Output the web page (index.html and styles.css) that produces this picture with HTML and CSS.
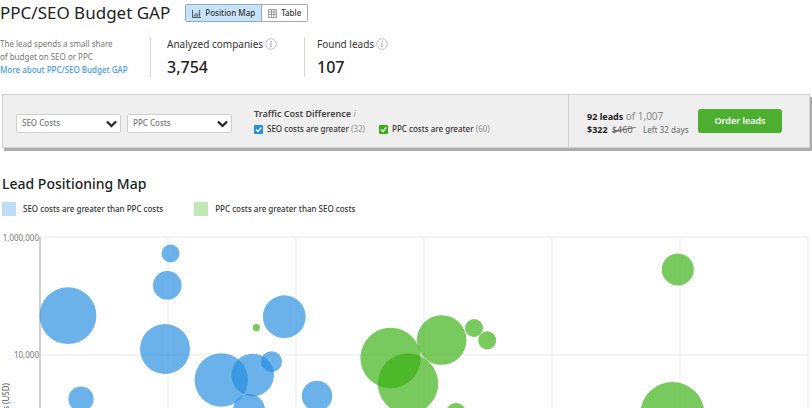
FILE: index.html
```html
<!DOCTYPE html>
<html lang="en">
<head>
<meta charset="utf-8">
<title>PPC/SEO Budget GAP</title>
<link rel="stylesheet" href="styles.css">
</head>
<body>
<header class="page-head">
  <h1 class="page-title">PPC/SEO Budget GAP</h1>
  <div class="view-switch">
    <button class="view-btn view-btn-active" type="button">
      <svg width="9" height="9" viewBox="0 0 10 10" fill="none" stroke="#37454f"><path d="M.5 1v8.500H10M2.500 6v2.500M4.500 4v4.500M6.500 5v3.500M8.500 1v7.500"/></svg>
      Position Map
    </button>
    <button class="view-btn" type="button">
      <svg width="9" height="9" viewBox="0 0 9 9" fill="none" stroke="#8b8b8b"><path d="M.5.5h8v8h-8zM.5 3h8M.5 5.500h8M3.500.5v8M6 .5v8" stroke-width=".8"/></svg>
      Table
    </button>
  </div>
</header>

<section class="stats">
  <div class="intro">
    <p>The lead spends a small share<br>of budget on SEO or PPC</p>
    <a class="more" href="#">More about PPC/SEO Budget GAP</a>
  </div>
  <div class="stat">
    <div class="stat-label">Analyzed companies
      <svg width="12" height="12" viewBox="0 0 12 12" fill="none" stroke="#c4c4c4"><circle cx="6" cy="6" r="5.300"/><path d="M6.600 3v1.200M5.200 5.300h1L5.700 8.700h1" stroke="#a5a5a5"/></svg>
    </div>
    <div class="stat-value">3,754</div>
  </div>
  <div class="stat">
    <div class="stat-label">Found leads
      <svg width="12" height="12" viewBox="0 0 12 12" fill="none" stroke="#c4c4c4"><circle cx="6" cy="6" r="5.300"/><path d="M6.600 3v1.200M5.200 5.300h1L5.700 8.700h1" stroke="#a5a5a5"/></svg>
    </div>
    <div class="stat-value">107</div>
  </div>
</section>

<section class="toolbar">
  <div class="filters">
    <div class="select-box">
      <select class="select" aria-label="SEO Costs"><option>SEO Costs</option></select>
      <svg class="chevron" width="11" height="8" viewBox="0 0 11 8" fill="none" stroke="#222" stroke-width="2.200"><path d="M1 1.500l4.500 4.500L10 1.500"/></svg>
    </div>
    <div class="select-box">
      <select class="select" aria-label="PPC Costs"><option>PPC Costs</option></select>
      <svg class="chevron" width="11" height="8" viewBox="0 0 11 8" fill="none" stroke="#222" stroke-width="2.200"><path d="M1 1.500l4.500 4.500L10 1.500"/></svg>
    </div>
    <div class="difference">
      <div class="difference-title">Traffic Cost Difference <i>i</i></div>
      <div class="checks">
        <label class="check"><span class="tick"><input class="box box-seo" type="checkbox" checked><svg class="mark" width="9" height="9" viewBox="0 0 9 9" fill="none" stroke="#fff" stroke-width="1.500"><path d="M2 4.500l2 2L7.200 2.500"/></svg></span><span>SEO costs are greater <span class="count">(32)</span></span></label>
        <label class="check"><span class="tick"><input class="box box-ppc" type="checkbox" checked><svg class="mark" width="9" height="9" viewBox="0 0 9 9" fill="none" stroke="#fff" stroke-width="1.500"><path d="M2 4.500l2 2L7.200 2.500"/></svg></span><span>PPC costs are greater <span class="count">(60)</span></span></label>
      </div>
    </div>
  </div>
  <div class="order">
    <div class="offer">
      <div class="offer-line"><b>92 leads</b> <span class="total">of 1,007</span></div>
      <div class="offer-line"><b>$322</b> <span class="old-price">$460</span> <span class="left">Left 32 days</span></div>
    </div>
    <button class="order-btn" type="button">Order leads</button>
  </div>
</section>

<main class="map">
  <h2 class="map-title">Lead Positioning Map</h2>
  <ul class="legend">
    <li class="legend-item"><span class="swatch swatch-seo"></span>SEO costs are greater than PPC costs</li>
    <li class="legend-item"><span class="swatch swatch-ppc"></span>PPC costs are greater than SEO costs</li>
  </ul>
</main>
<svg class="chart" viewBox="0 0 812 178">
  <g class="grid">
    <path d="M40 7h768M40 125h768M168 7v171M296 7v171M424 7v171M552 7v171M680 7v171M808 7v171"/>
  </g>
  <path class="axis" d="M40 7v171"/>
  <text class="tick-label" x="39" y="11">1,000,000</text>
  <text class="tick-label" x="39" y="128">10,000</text>
  <text class="axis-title" transform="translate(9 153) rotate(-90)">s (USD)</text>
  <g class="seo">
    <circle cx="68" cy="85.700" r="28.400"/>
    <circle cx="170.500" cy="23.500" r="9"/>
    <circle cx="167.300" cy="55.300" r="14.300"/>
    <circle cx="165" cy="119" r="25"/>
    <circle cx="81" cy="169" r="12.600"/>
    <circle cx="221.300" cy="150" r="26.700"/>
    <circle cx="252.700" cy="145" r="21.300"/>
    <circle cx="271.500" cy="131.700" r="10.500"/>
    <circle cx="284.300" cy="86.700" r="21.400"/>
    <circle cx="249" cy="180" r="16"/>
    <circle cx="317" cy="166" r="15.200"/>
  </g>
  <g class="ppc">
    <circle cx="256.300" cy="97.700" r="3.600"/>
    <circle cx="390.600" cy="128" r="30.200"/>
    <circle cx="408" cy="153.700" r="30.200"/>
    <circle cx="441.700" cy="110" r="24.800"/>
    <circle cx="474" cy="98" r="9"/>
    <circle cx="487.200" cy="110.300" r="9"/>
    <circle cx="456" cy="183" r="10"/>
    <circle cx="677.800" cy="39.500" r="16"/>
    <circle cx="672.400" cy="184" r="32"/>
  </g>
</svg>
</body>
</html>
```
FILE: styles.css
```css
* { box-sizing: border-box; }
body {
  margin: 0;
  background: #fff;
  color: #333;
  font-family: "Noto Sans", sans-serif;
  font-size: 8px;
  line-height: 12px;
}
h1, h2, p, ul { margin: 0; padding: 0; font-weight: 400; }
button, select { font: inherit; color: inherit; }
svg { flex: none; }

.page-head { display: flex; align-items: center; gap: 15px; height: 26px; }
.page-title { font-size: 17px; line-height: 26px; color: #222; }
.view-switch { display: flex; height: 18px; }
.view-btn {
  display: flex;
  align-items: center;
  gap: 4px;
  padding: 0 6px;
  border: 1px solid #a9a9a9;
  border-radius: 0 2px 2px 0;
  background: #fff;
  font-weight: 500;
}
.view-btn + .view-btn { border-left: 0; }
.view-btn-active { background: #c8e3f8; border-color: #85aecb; border-radius: 2px 0 0 2px; }

.stats { display: flex; margin-top: 11px; height: 40px; }
.intro { width: 150px; color: #777; font-weight: 500; line-height: 13px; white-space: nowrap; }
.more { color: #3f9bea; text-decoration: none; }
.stat { width: 154px; padding-left: 16px; border-left: 1px solid #d8d8d8; }
.stat + .stat { padding-left: 12px; }
.stat-label { display: flex; align-items: center; gap: 2px; font-size: 10px; line-height: 14px; }
.stat-value { margin-top: 6px; font-size: 16px; line-height: 20px; font-weight: 500; color: #222; }

.toolbar {
  display: flex;
  margin: 17px 2px 0;
  height: 54px;
  border: 1px solid #d2d2d2;
  background: #efefef;
  box-shadow: 2px 3px 0 #ababab;
}
.filters { flex: 1; display: flex; align-items: center; gap: 6px; padding-left: 13px; }
.select-box { position: relative; width: 105px; }
.select {
  display: block;
  width: 100%;
  height: 19px;
  margin-top: 4px;
  padding: 0 5px;
  border: 1px solid #cfcfcf;
  border-radius: 2px;
  background: #fff;
  color: #777;
  font-weight: 500;
  appearance: none;
}
.chevron { position: absolute; right: 4px; top: 10px; pointer-events: none; }
.difference { margin-left: 16px; }
.difference-title { font-size: 9px; line-height: 14px; font-weight: 600; color: #444; }
.difference-title i { color: #999; font-weight: 400; }
.checks { display: flex; gap: 14px; margin-top: 2px; font-weight: 500; }
.check { display: flex; align-items: center; gap: 4px; }
.tick { position: relative; width: 9px; height: 9px; }
.box { display: block; width: 9px; height: 9px; margin: 0; appearance: none; border-radius: 1px; }
.box-seo { background: #248edf; }
.box-ppc { background: #38b011; }
.mark { position: absolute; inset: 0; pointer-events: none; }
.count { color: #999; }

.order {
  display: flex;
  align-items: center;
  gap: 6px;
  width: 241px;
  padding-left: 18px;
  border-left: 1px solid #d2d2d2;
}
.offer { width: 105px; padding-top: 4px; white-space: nowrap; }
.offer-line { font-size: 9px; line-height: 13px; }
.offer-line b { color: #222; }
.total { font-size: 10px; color: #888; }
.old-price { position: relative; margin-left: 2px; color: #666; }
.old-price::after {
  content: "";
  position: absolute;
  left: 0;
  right: -3px;
  top: 6px;
  border-top: 1px solid #555;
  transform: rotate(-10deg);
}
.left { margin-left: 8px; font-size: 8px; font-weight: 500; color: #777; }
.order-btn {
  width: 84px;
  height: 24px;
  padding: 0;
  border: 0;
  border-radius: 3px;
  background: #4caf30;
  color: #fff;
  font-size: 9px;
  font-weight: 600;
}

.map { padding: 26px 2px 0; }
.map-title { font-size: 14px; line-height: 20px; font-weight: 500; color: #222; }
.legend { display: flex; gap: 31px; margin-top: 8px; list-style: none; font-weight: 500; }
.legend-item { display: flex; align-items: center; gap: 7px; height: 14px; }
.swatch { width: 14px; height: 14px; }
.swatch-seo { background: #bfddf6; }
.swatch-ppc { background: #c2e7b6; }

.chart { display: block; width: 100%; margin-top: 14px; }
.grid { fill: none; stroke: #e9e9e9; }
.axis { stroke: #d0d0d0; stroke-width: 2; }
.tick-label { font-size: 8px; fill: #777; text-anchor: end; }
.axis-title { font-size: 8px; fill: #555; text-anchor: end; }
.seo { fill: #248edf; fill-opacity: .68; }
.ppc { fill: #38b011; fill-opacity: .68; }
```
